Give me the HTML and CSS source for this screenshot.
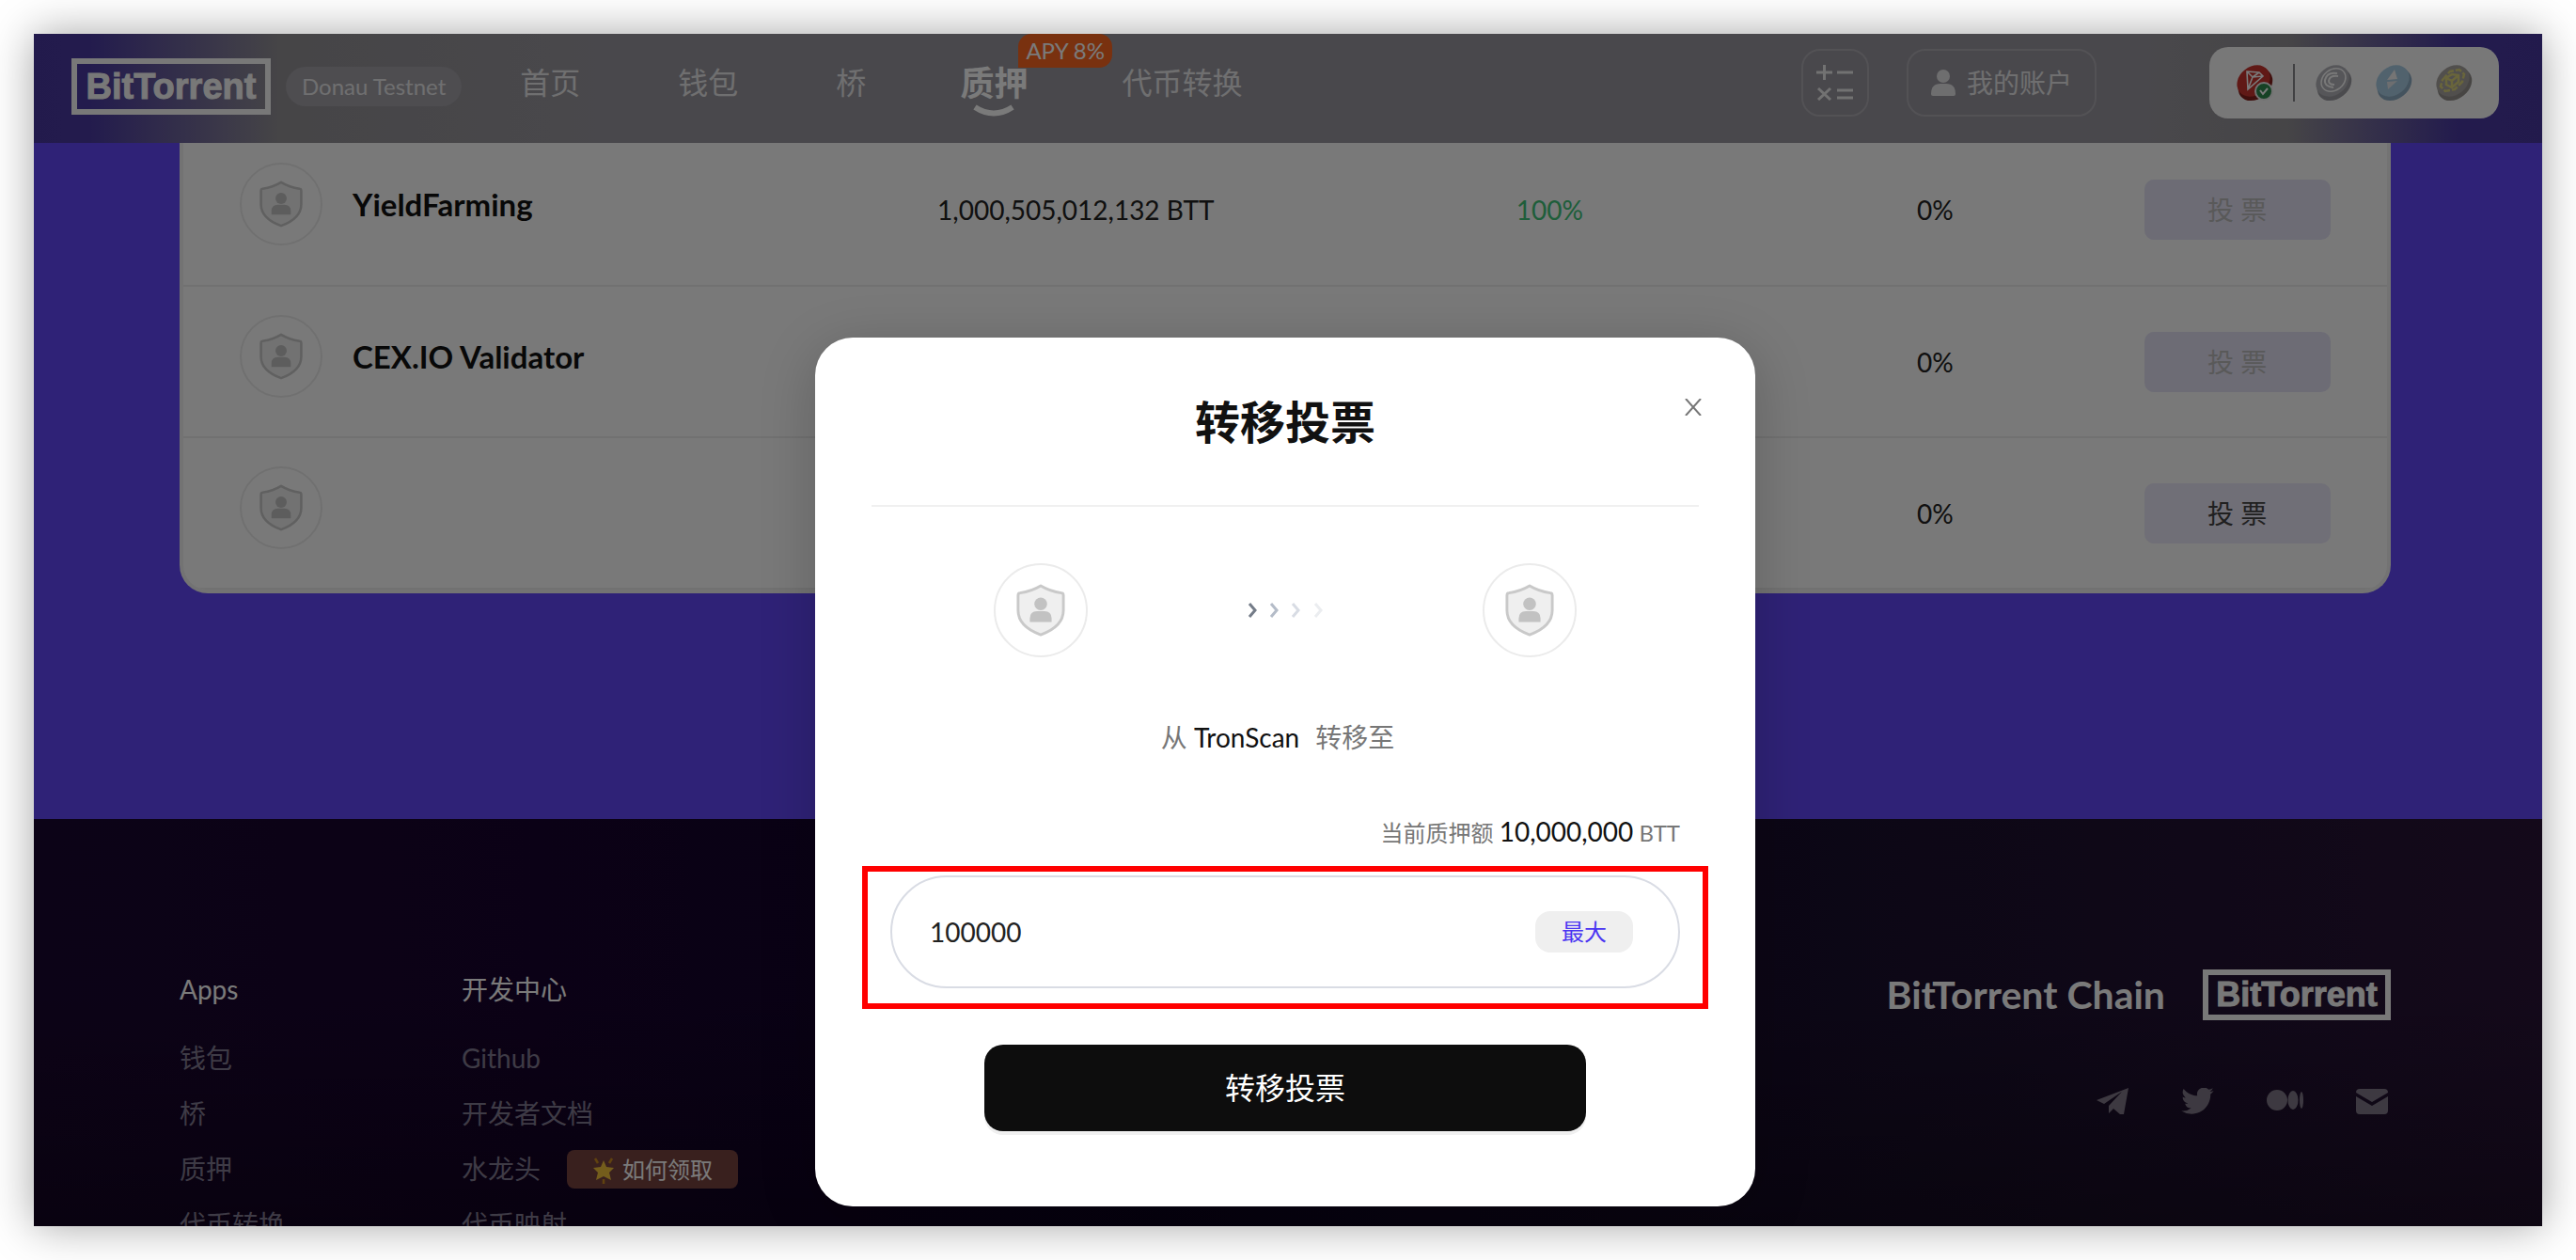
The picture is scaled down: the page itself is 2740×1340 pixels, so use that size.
FILE: index.html
```html
<!DOCTYPE html>
<html lang="zh-CN">
<head>
<meta charset="utf-8">
<title>BitTorrent Chain 质押</title>
<link rel="stylesheet" href="styles.css">
</head>
<body>
<svg class="defs" aria-hidden="true">
  <symbol id="shield" viewBox="0 0 56 60">
    <path d="M28 3 Q38 9 51 11 Q53 11 53 14 V30 Q53 48 28 57 Q3 48 3 30 V14 Q3 11 5 11 Q18 9 28 3Z" fill="#efefef" stroke="#c9c9c9" stroke-width="3" stroke-linejoin="round"/>
    <circle cx="28" cy="23" r="7" fill="#c2c2c2"/>
    <path d="M16 43 V39 Q16 31 24 31 H32 Q40 31 40 39 V43Z" fill="#c2c2c2"/>
  </symbol>
  <symbol id="coin-c" viewBox="0 0 40 40">
    <ellipse cx="21" cy="22" rx="20" ry="15" transform="rotate(-38 21 22)" fill="#9d9da3"/>
    <ellipse cx="19" cy="18" rx="19" ry="15" transform="rotate(-38 19 18)" fill="#b4b4ba"/>
    <ellipse cx="20" cy="17" rx="14" ry="11" transform="rotate(-38 20 17)" fill="none" stroke="#fafafa" stroke-width="1.600"/>
    <path d="M24 10 Q13 8 11 17 Q10 24 20 25 M25 13 Q16 12 15 18 Q15 22 21 22" fill="none" stroke="#fafafa" stroke-width="2"/>
  </symbol>
</svg>

<div class="window">
  <header class="header">
    <div class="identity">
      <a class="logo" href="#">BitTorrent</a>
      <span class="network">Donau Testnet</span>
    </div>
    <nav class="nav">
      <a href="#">首页</a>
      <a href="#">钱包</a>
      <a href="#">桥</a>
      <a class="active" href="#">质押
        <svg class="smile" viewBox="0 0 44 14"><path d="M2 3 Q22 16 42 3" fill="none" stroke="#fff" stroke-width="6"/></svg>
        <span class="apy">APY 8%</span>
      </a>
      <a href="#">代币转换</a>
    </nav>
    <button class="outline calc" aria-label="计算器">
      <svg width="40" height="38" viewBox="0 0 40 38" fill="none" stroke="#eee" stroke-width="3">
        <path d="M0 8H17M8.500 0V16M22 8H39M2 25L15 37M15 25L2 37M22 27H39M22 35H39"/>
      </svg>
    </button>
    <button class="outline account">
      <svg width="26" height="28" viewBox="0 0 26 28" fill="#e6e6e8"><circle cx="13" cy="7" r="7"/><path d="M0 26 Q0 15 10 15 H16 Q26 15 26 26 Q26 28 24 28 H2 Q0 28 0 26Z"/></svg>
      我的账户
    </button>
    <div class="chains">
      <svg width="40" height="40" viewBox="0 0 40 40">
        <ellipse cx="21" cy="22" rx="20" ry="15" transform="rotate(-38 21 22)" fill="#84201c"/>
        <ellipse cx="19" cy="18" rx="19" ry="15" transform="rotate(-38 19 18)" fill="#c8352f"/>
        <path d="M12 8 L25 9 L29 13 L13 27Z M12 8 L18 14 L29 13 M18 14 L25 9 M18 14 L13 27" fill="none" stroke="#fff" stroke-width="1.600"/>
        <circle cx="30" cy="29" r="9" fill="#2f8a4e" stroke="#eee" stroke-width="2"/>
        <path d="M26 28L29 32L34 26" fill="none" stroke="#fff" stroke-width="2"/>
      </svg>
      <span class="rule"></span>
      <svg width="40" height="40"><use href="#coin-c"/></svg>
      <svg width="40" height="40" viewBox="0 0 40 40">
        <ellipse cx="21" cy="22" rx="20" ry="15" transform="rotate(-38 21 22)" fill="#8fadc4"/>
        <ellipse cx="19" cy="18" rx="19" ry="15" transform="rotate(-38 19 18)" fill="#a9cde3"/>
        <path d="M21 6L24 16L13 17Z" fill="#f4f4f4"/><path d="M24 18L14 27L13 19Z" fill="#e4e6ea"/>
      </svg>
      <svg width="40" height="40" viewBox="0 0 40 40">
        <ellipse cx="21" cy="22" rx="20" ry="15" transform="rotate(-38 21 22)" fill="#94908c"/>
        <ellipse cx="19" cy="18" rx="19" ry="15" transform="rotate(-38 19 18)" fill="#aaa6a1"/>
        <path d="M8 17L16 8L26 6L31 11L29 19L21 27L11 29L6 24Z" fill="none" stroke="#dcd47c" stroke-width="2.500" stroke-dasharray="7 2"/>
        <path d="M12 15L18 18L25 12M18 18L18 25M12 22L18 25L25 19L25 12L18 11L12 15Z" fill="none" stroke="#dcd47c" stroke-width="2.500"/>
      </svg>
    </div>
  </header>

  <main class="stake">
    <div class="card">
      <table class="validators">
        <colgroup><col class="c-name"><col class="c-amount"><col class="c-online"><col class="c-fee"><col class="c-vote"></colgroup>
        <tbody>
          <tr>
            <td><div class="who"><span class="avatar"><svg><use href="#shield"/></svg></span>YieldFarming</div></td>
            <td>1,000,505,012,132 BTT</td><td class="good">100%</td><td>0%</td>
            <td><button class="vote" disabled>投 票</button></td>
          </tr>
          <tr>
            <td><div class="who"><span class="avatar"><svg><use href="#shield"/></svg></span>CEX.IO Validator</div></td>
            <td></td><td></td><td>0%</td>
            <td><button class="vote" disabled>投 票</button></td>
          </tr>
          <tr>
            <td><div class="who"><span class="avatar"><svg><use href="#shield"/></svg></span></div></td>
            <td></td><td></td><td>0%</td>
            <td><button class="vote">投 票</button></td>
          </tr>
        </tbody>
      </table>
    </div>
  </main>

  <footer class="footer">
    <div class="links">
      <h2>Apps</h2>
      <a href="#">钱包</a>
      <a href="#">桥</a>
      <a href="#">质押</a>
      <a href="#">代币转换</a>
    </div>
    <div class="links">
      <h2>开发中心</h2>
      <a href="#">Github</a>
      <a href="#">开发者文档</a>
      <div class="faucet"><a href="#">水龙头</a>
        <a class="claim" href="#">
          <svg width="24" height="32" viewBox="0 0 24 32"><path d="M12 6L15 13L23 14L18 19L20 27L12 23L4 27L6 19L1 14L9 13Z" fill="#f3c23c"/><path d="M3 4L6 9M21 4L18 9M12 26V31" stroke="#c98a20" stroke-width="2.500"/></svg>
          如何领取</a>
      </div>
      <a href="#">代币映射</a>
    </div>
    <div class="brand">
      <div class="brand-row">BitTorrent Chain <a class="logo small" href="#">BitTorrent</a></div>
      <div class="social">
        <a href="#" aria-label="Telegram"><svg width="34" height="28" viewBox="0 0 34 28"><path d="M34 0L0 13L8 17L27 4L13 19V27L18 22L25 28L29 28Z"/></svg></a>
        <a href="#" aria-label="Twitter"><svg width="35" height="28" viewBox="0 2.500 24 19.500"><path d="M23.950 4.570a10 10 0 0 1-2.820.770 4.960 4.960 0 0 0 2.160-2.720c-.950.550-2 .950-3.120 1.180a4.920 4.920 0 0 0-8.380 4.480C7.690 8.100 4.070 6.130 1.640 3.160a4.920 4.920 0 0 0 1.520 6.570 4.900 4.900 0 0 1-2.230-.610v.060a4.920 4.920 0 0 0 3.950 4.830 5 5 0 0 1-2.210.080 4.940 4.940 0 0 0 4.600 3.420A9.870 9.870 0 0 1 0 19.540a13.990 13.990 0 0 0 7.550 2.210c9.050 0 14-7.500 14-13.980l-.020-.630a10 10 0 0 0 2.420-2.570z"/></svg></a>
        <a href="#" aria-label="Medium"><svg width="39" height="28" viewBox="0 0 39 28"><circle cx="11" cy="13" r="11"/><ellipse cx="28" cy="13" rx="5.500" ry="10"/><ellipse cx="37" cy="13" rx="2" ry="9"/></svg></a>
        <a href="#" aria-label="Mail"><svg width="34" height="28" viewBox="0 0 34 28"><path d="M0 5Q0 1 4 1H30Q34 1 34 5L17 15Z"/><path d="M0 9L17 19L34 9V24Q34 28 30 28H4Q0 28 0 24Z"/></svg></a>
      </div>
    </div>
  </footer>

  <div class="overlay">
    <section class="modal" role="dialog" aria-labelledby="dialog-title">
      <button class="close" aria-label="关闭"><svg width="18" height="18" viewBox="0 0 18 18"><path d="M1 0L17 18M17 0L1 18" stroke="#777" stroke-width="2"/></svg></button>
      <h1 id="dialog-title">转移投票</h1>
      <div class="transfer">
        <span class="avatar large"><svg><use href="#shield"/></svg></span>
        <svg width="80" height="16" viewBox="0 0 80 16" fill="none" stroke-width="3"><path d="M2 1L8 8L2 15" stroke="#747c88"/><path d="M25 1L31 8L25 15" stroke="#b4bcc8"/><path d="M48 1L54 8L48 15" stroke="#d8dce4"/><path d="M72 1L78 8L72 15" stroke="#ebedf0"/></svg>
        <span class="avatar large"><svg><use href="#shield"/></svg></span>
      </div>
      <p class="route">从 <b>TronScan</b><span>转移至</span></p>
      <label class="balance" for="amount">当前质押额 <b>10,000,000</b> BTT</label>
      <div class="field">
        <input id="amount" type="text" value="100000">
        <button class="max">最大</button>
        <span class="highlight"></span>
      </div>
      <button class="submit">转移投票</button>
    </section>
  </div>
</div>
</body>
</html>
```
FILE: styles.css
```css
* { box-sizing: border-box; }
body {
  margin: 0;
  padding: 36px;
  height: 100vh;
  overflow: hidden;
  background: #fff;
  color: #222;
  font: 28px/40px Lato, "Noto Sans CJK SC", sans-serif;
}
a { color: inherit; text-decoration: none; }
button, input { font: inherit; color: inherit; border: 0; margin: 0; padding: 0; }
h1, h2, p { margin: 0; }
b { font-weight: 400; }
svg { flex: none; }
.defs { position: absolute; width: 0; height: 0; }

.window {
  position: relative;
  display: flex;
  flex-direction: column;
  height: 100%;
  overflow: hidden;
  background: #6247f8;
  box-shadow: 0 0 44px rgba(0, 0, 0, .36);
}

/* top bar */
.header {
  position: relative;
  z-index: 1;
  flex: none;
  display: flex;
  align-items: center;
  height: 116px;
  padding: 0 46px 12px 40px;
  color: #e8e8ea;
  background: linear-gradient(90deg, #4838a0 0, #4a3aa2 60px, #929094 260px, #99979f 600px, #99979f calc(100% - 420px), #929094 calc(100% - 270px), #4a3aa2 calc(100% - 90px), #4838a0 100%);
}
.identity {
  display: flex;
  align-items: center;
  gap: 16px;
  padding-top: 8px;
}
.logo {
  display: flex;
  align-items: center;
  justify-content: center;
  width: 212px;
  height: 60px;
  border: 6px solid #fafafa;
  color: #fafafa;
  font: bold 38px/48px "Liberation Sans", sans-serif;
  -webkit-text-stroke: 1px #fafafa;
}
.network {
  padding: 0 17px;
  border-radius: 21px;
  background: #a3a1a7;
  font-size: 24px;
  line-height: 42px;
}
.nav {
  display: flex;
  align-items: center;
  gap: 104px;
  margin-left: 62px;
  font-size: 32px;
  line-height: 48px;
  white-space: nowrap;
}
.active {
  position: relative;
  margin: 0 -4px;
  color: #fff;
  font-size: 36px;
  font-weight: 700;
}
.smile { position: absolute; left: 14px; top: 47px; width: 44px; height: 14px; }
.apy {
  position: absolute;
  left: 62px;
  bottom: 40px;
  padding: 0 8px;
  border-radius: 14px 14px 14px 0;
  background: #fd6620;
  font-size: 24px;
  font-weight: 400;
  line-height: 36px;
}
.outline {
  display: flex;
  align-items: center;
  justify-content: center;
  gap: 12px;
  height: 72px;
  border: 2px solid #adabb2;
  border-radius: 20px;
  background: none;
}
.calc { width: 72px; margin-left: auto; }
.account { width: 202px; margin-left: 40px; }
.chains {
  display: flex;
  align-items: center;
  gap: 24px;
  height: 76px;
  margin-left: 120px;
  padding: 0 28px;
  border-radius: 20px;
  background: #fbfbfb;
}
.rule { width: 2px; height: 40px; margin: 0 -3px; background: #88888c; }

/* validators */
.stake { flex: none; padding: 0 161px 240px 155px; margin-top: -9px; }
.card {
  border: solid #f0f0f0;
  border-width: 0 4px 4px;
  border-radius: 0 0 30px 30px;
  background: #fdfdfd;
  overflow: hidden;
}
.validators { width: 100%; table-layout: fixed; border-collapse: collapse; }
.c-name { width: 29%; }
.c-amount { width: 23%; }
.c-online { width: 20%; }
.c-fee { width: 15%; }
.c-vote { width: 13%; }
.validators td {
  height: 161px;
  padding: 0;
  border-bottom: 2px solid #ececec;
  text-align: center;
}
.validators td:last-child { padding-right: 14px; }
.validators .good { color: #3fc47a; }
.who {
  display: flex;
  align-items: center;
  gap: 32px;
  padding: 0 0 12px 60px;
  color: #111;
  font-size: 33px;
  font-weight: 700;
}
.avatar {
  display: flex;
  align-items: center;
  justify-content: center;
  width: 88px;
  height: 88px;
  border: 2px solid #ebebeb;
  border-radius: 50%;
}
.avatar svg { width: 48px; height: 52px; }
.large { width: 100px; height: 100px; }
.large svg { width: 54px; height: 58px; }
.vote {
  width: 198px;
  height: 64px;
  border-radius: 10px;
  background: #ebe8f8;
  color: #444;
}
.vote:disabled { background: #e3e2f5; color: #bbb; }

/* footer */
.footer {
  flex: 1 0 auto;
  display: flex;
  padding: 152px 161px 0 155px;
  background:
    linear-gradient(180deg, rgba(0, 0, 0, 0) 40%, rgba(0, 0, 0, .3) 100%),
    linear-gradient(90deg, #1b0830 0, #18042e 20%, #10062a 45%, #1c102e 75%, #2a1438 100%);
  color: #fff;
}
.links { width: 300px; color: #837c92; line-height: 59px; white-space: nowrap; }
.links h2 { margin-bottom: 14px; font-size: 28px; line-height: 59px; font-weight: 400; color: #fff; }
.links > a { display: block; }
.faucet { display: flex; align-items: center; gap: 28px; }
.claim {
  display: flex;
  align-items: center;
  justify-content: center;
  gap: 8px;
  width: 182px;
  height: 41px;
  border-radius: 8px;
  background: #784340;
  color: #fff;
  font-size: 24px;
  line-height: 40px;
}
.brand { margin-left: auto; }
.brand-row {
  display: flex;
  align-items: center;
  gap: 40px;
  margin-top: 8px;
  font-size: 41px;
  font-weight: 700;
}
.small { width: 200px; height: 54px; font-size: 36px; }
.social {
  display: flex;
  justify-content: flex-end;
  gap: 56px;
  margin-top: 72px;
  padding-right: 3px;
  fill: #807888;
}
.social svg { display: block; }

/* dialog */
.overlay {
  position: absolute;
  inset: 0;
  z-index: 2;
  display: flex;
  justify-content: center;
  align-items: flex-start;
  padding: 323px 6px 0 0;
  background: rgba(0, 0, 0, .52);
}
.modal {
  position: relative;
  display: flex;
  flex-direction: column;
  width: 1000px;
  padding: 60px 60px 80px;
  border-radius: 40px;
  background: #fff;
  color: #777;
  box-shadow: 0 12px 60px rgba(0, 0, 0, .2);
}
.modal b { color: #111; font-size: 28px; }
.close { position: absolute; top: 65px; right: 57px; width: 18px; height: 18px; background: none; }
.close svg { display: block; }
.modal h1 {
  padding-bottom: 58px;
  border-bottom: 2px solid #f0f0f0;
  color: #111;
  font-size: 48px;
  line-height: 60px;
  text-align: center;
}
.transfer {
  display: flex;
  align-items: center;
  justify-content: space-between;
  padding: 60px 130px 0;
}
.route { margin: 65px 16px 0 0; text-align: center; }
.route span { margin-left: 17px; }
.balance { margin: 60px 20px 0 0; text-align: right; font-size: 24px; }
.field {
  position: relative;
  display: flex;
  align-items: center;
  height: 120px;
  margin: 25px 20px 60px;
  padding: 0 48px 0 40px;
  border: 2px solid #d9dce4;
  border-radius: 60px;
}
.field input { flex: 1; min-width: 0; background: none; color: #222; outline: 0; }
.max {
  width: 104px;
  height: 44px;
  border-radius: 16px;
  background: #efefef;
  color: #4a35f2;
  font-size: 24px;
}
.highlight { position: absolute; inset: -12px -32px -24px; border: 6px solid #f00; }
.submit {
  width: 640px;
  height: 92px;
  align-self: center;
  border-radius: 20px;
  background: #0d0d0d;
  box-shadow: 0 4px 0 #f0f0f0;
  color: #fff;
  font-size: 32px;
}
```
